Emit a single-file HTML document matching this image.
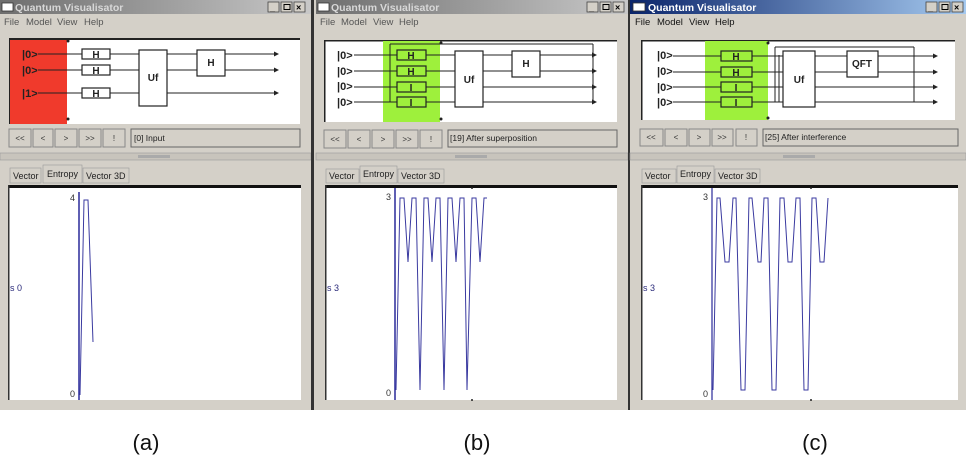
<!DOCTYPE html>
<html><head><meta charset="utf-8"><style>
html,body{margin:0;padding:0;background:#fff;}
svg{display:block;font-family:"Liberation Sans",sans-serif;}
</style></head><body>
<svg width="966" height="466" viewBox="0 0 966 466" xmlns="http://www.w3.org/2000/svg">
<defs>
<linearGradient id="gi" x1="0" x2="1"><stop offset="0" stop-color="#6e6e6e"/><stop offset="1" stop-color="#c8c8c8"/></linearGradient>
<linearGradient id="ga" x1="0" x2="1"><stop offset="0" stop-color="#0a246a"/><stop offset="1" stop-color="#a6caf0"/></linearGradient>
<marker id="ar" markerWidth="5" markerHeight="5" refX="4" refY="2.5" orient="auto"><path d="M0,0 L5,2.5 L0,5z" fill="#222"/></marker>
</defs>
<rect width="966" height="466" fill="#fff"/>

<!-- ===== Window A ===== -->
<g>
<rect x="0" y="0" width="311" height="410" fill="#d4d0c8"/>
<rect x="0" y="0" width="311" height="14" fill="url(#gi)"/>
<rect x="2" y="3" width="11" height="8" fill="#fff" stroke="#333" stroke-width="0.8"/>
<text x="15" y="11" font-size="10.5" font-weight="bold" fill="#d8d8d8">Quantum Visualisator</text>
<g fill="#d4d0c8" stroke="#444" stroke-width="0.8"><rect x="268" y="2" width="11" height="10"/><rect x="281" y="2" width="11" height="10"/><rect x="294" y="2" width="11" height="10"/></g>
<text x="270" y="11" font-size="9" font-weight="bold">_</text><rect x="284" y="4.5" width="6" height="5" fill="none" stroke="#000"/><text x="296" y="10.5" font-size="9" font-weight="bold">×</text>
<g font-size="9.5" fill="#555"><text x="4" y="25">File</text><text x="26" y="25">Model</text><text x="57" y="25">View</text><text x="84" y="25">Help</text></g>
<rect x="9" y="38" width="291" height="86" fill="#fff"/>
<rect x="9" y="38" width="291" height="2" fill="#222"/><rect x="9" y="38" width="1.5" height="86" fill="#222"/>
<rect x="10" y="40" width="57" height="84" fill="#f03a2c"/>
<circle cx="68" cy="41" r="1.5" fill="#222"/><circle cx="68" cy="119" r="1.5" fill="#222"/>
<g font-size="11" font-weight="bold" fill="#222"><text x="22" y="58">|0&gt;</text><text x="22" y="74">|0&gt;</text><text x="22" y="97">|1&gt;</text></g>
<g stroke="#222" stroke-width="1" marker-end="url(#ar)"><line x1="38" y1="54" x2="278" y2="54"/><line x1="38" y1="70" x2="278" y2="70"/><line x1="38" y1="93" x2="278" y2="93"/></g>
<g fill="#fff" stroke="#222" stroke-width="1.2"><rect x="82" y="49" width="28" height="10"/><rect x="82" y="65" width="28" height="10"/><rect x="82" y="88" width="28" height="10"/><rect x="139" y="50" width="28" height="56"/><rect x="197" y="50" width="28" height="26"/></g>
<g font-size="10" font-weight="bold" fill="#222" text-anchor="middle"><text x="96" y="58">H</text><text x="96" y="74">H</text><text x="96" y="97">H</text><text x="153" y="81">Uf</text><text x="211" y="66">H</text></g>
<g fill="#d4d0c8" stroke="#888" stroke-width="1"><rect x="9" y="129" width="22" height="18"/><rect x="33" y="129" width="20" height="18"/><rect x="55" y="129" width="22" height="18"/><rect x="79" y="129" width="22" height="18"/><rect x="103" y="129" width="22" height="18"/></g>
<g font-size="8" fill="#333" text-anchor="middle"><text x="20" y="141">&lt;&lt;</text><text x="43" y="141">&lt;</text><text x="66" y="141">&gt;</text><text x="90" y="141">&gt;&gt;</text><text x="114" y="141">!</text></g>
<rect x="131" y="129" width="169" height="18" fill="#d4d0c8" stroke="#666"/>
<text x="134" y="141" font-size="8.5" fill="#222">[0] Input</text>
<rect x="0" y="153" width="311" height="7" fill="#c8c4bc" stroke="#999" stroke-width="0.6"/><rect x="138" y="155" width="32" height="3" fill="#aaa"/>
<rect x="10" y="168" width="31" height="15" fill="#d4d0c8" stroke="#999" stroke-width="0.6"/>
<rect x="43" y="165" width="39" height="18" fill="#d4d0c8" stroke="#999" stroke-width="0.6"/>
<rect x="83" y="168" width="46" height="15" fill="#d4d0c8" stroke="#999" stroke-width="0.6"/>
<g font-size="9" fill="#222"><text x="13" y="179">Vector</text><text x="47" y="177">Entropy</text><text x="86" y="179">Vector 3D</text></g>
<rect x="8" y="185" width="293" height="215" fill="#fff"/>
<rect x="8" y="185" width="293" height="3" fill="#111"/><rect x="8" y="185" width="1.5" height="215" fill="#333"/>
<line x1="79" y1="192" x2="79" y2="400" stroke="#2a2a9a" stroke-width="1.5"/>
<g font-size="9" fill="#333"><text x="70" y="201">4</text><text x="70" y="397">0</text></g>
<text x="10" y="291" font-size="9" fill="#2a2a7a">s 0</text>
<polyline points="80,395 84,200 88,200 93,342" fill="none" stroke="#3a3aa0" stroke-width="1"/>
<rect x="311" y="0" width="3" height="410" fill="#333"/>
</g>

<!-- ===== Window B ===== -->
<g>
<rect x="314" y="0" width="316" height="410" fill="#d4d0c8"/>
<rect x="316" y="0" width="312" height="14" fill="url(#gi)"/>
<rect x="318" y="3" width="11" height="8" fill="#fff" stroke="#333" stroke-width="0.8"/>
<text x="331" y="11" font-size="10.5" font-weight="bold" fill="#d8d8d8">Quantum Visualisator</text>
<g fill="#d4d0c8" stroke="#444" stroke-width="0.8"><rect x="587" y="2" width="11" height="10"/><rect x="600" y="2" width="11" height="10"/><rect x="613" y="2" width="11" height="10"/></g>
<text x="589" y="11" font-size="9" font-weight="bold">_</text><rect x="603" y="4.5" width="6" height="5" fill="none" stroke="#000"/><text x="615" y="10.5" font-size="9" font-weight="bold">×</text>
<g font-size="9.5" fill="#555"><text x="320" y="25">File</text><text x="341" y="25">Model</text><text x="373" y="25">View</text><text x="399" y="25">Help</text></g>
<rect x="324" y="40" width="293" height="82" fill="#fff"/>
<rect x="324" y="40" width="293" height="1.5" fill="#222"/><rect x="324" y="40" width="1.5" height="82" fill="#222"/>
<rect x="383" y="41" width="57" height="81" fill="#9ef03c"/>
<circle cx="441" cy="43" r="1.5" fill="#222"/><circle cx="441" cy="119" r="1.5" fill="#222"/>
<g font-size="11" font-weight="bold" fill="#222"><text x="337" y="59">|0&gt;</text><text x="337" y="75">|0&gt;</text><text x="337" y="90">|0&gt;</text><text x="337" y="106">|0&gt;</text></g>
<g stroke="#222" stroke-width="1"><line x1="390" y1="44" x2="593" y2="44"/><line x1="593" y1="44" x2="593" y2="102"/><line x1="390" y1="44" x2="390" y2="102"/></g>
<g stroke="#222" stroke-width="1" marker-end="url(#ar)"><line x1="354" y1="55" x2="596" y2="55"/><line x1="354" y1="71" x2="596" y2="71"/><line x1="354" y1="87" x2="596" y2="87"/><line x1="354" y1="102" x2="596" y2="102"/></g>
<g fill="#9ef03c" stroke="#222" stroke-width="1.2"><rect x="397" y="50" width="29" height="10"/><rect x="397" y="66" width="29" height="10"/><rect x="397" y="82" width="29" height="10"/><rect x="397" y="97" width="29" height="10"/></g>
<g fill="#fff" stroke="#222" stroke-width="1.2"><rect x="455" y="51" width="28" height="56"/><rect x="512" y="51" width="28" height="26"/></g>
<g font-size="10" font-weight="bold" fill="#222" text-anchor="middle"><text x="411" y="59">H</text><text x="411" y="75">H</text><text x="411" y="91">I</text><text x="411" y="106">I</text><text x="469" y="83">Uf</text><text x="526" y="67">H</text></g>
<g fill="#d4d0c8" stroke="#888" stroke-width="1"><rect x="324" y="130" width="22" height="18"/><rect x="348" y="130" width="22" height="18"/><rect x="372" y="130" width="22" height="18"/><rect x="396" y="130" width="22" height="18"/><rect x="420" y="130" width="22" height="18"/></g>
<g font-size="8" fill="#333" text-anchor="middle"><text x="335" y="142">&lt;&lt;</text><text x="359" y="142">&lt;</text><text x="383" y="142">&gt;</text><text x="407" y="142">&gt;&gt;</text><text x="431" y="142">!</text></g>
<rect x="448" y="130" width="169" height="17" fill="#d4d0c8" stroke="#666"/>
<text x="450" y="141" font-size="8.5" fill="#222">[19] After superposition</text>
<rect x="316" y="153" width="312" height="7" fill="#c8c4bc" stroke="#999" stroke-width="0.6"/><rect x="455" y="155" width="32" height="3" fill="#aaa"/>
<rect x="326" y="169" width="33" height="14" fill="#d4d0c8" stroke="#999" stroke-width="0.6"/>
<rect x="360" y="166" width="37" height="17" fill="#d4d0c8" stroke="#999" stroke-width="0.6"/>
<rect x="398" y="169" width="46" height="14" fill="#d4d0c8" stroke="#999" stroke-width="0.6"/>
<g font-size="9" fill="#222"><text x="329" y="179">Vector</text><text x="363" y="177">Entropy</text><text x="401" y="179">Vector 3D</text></g>
<rect x="325" y="187" width="292" height="213" fill="#fff"/>
<rect x="325" y="185" width="292" height="3" fill="#111"/><rect x="325" y="185" width="1.5" height="215" fill="#333"/>
<line x1="395" y1="188" x2="395" y2="400" stroke="#2a2a9a" stroke-width="1.5"/>
<g font-size="9" fill="#333"><text x="386" y="200">3</text><text x="386" y="396">0</text></g>
<text x="327" y="291" font-size="9" fill="#2a2a7a">s 3</text>
<polyline points="396,390 400,198 404,198 408,262 412,198 416,198 420,390 424,198 428,198 432,262 436,198 440,198 444,390 448,198 452,198 456,262 460,198 464,198 467,390 472,198 476,198 480,262 484,198 487,198" fill="none" stroke="#3a3aa0" stroke-width="1"/>
<circle cx="472" cy="188" r="1" fill="#222"/><circle cx="472" cy="400" r="1" fill="#222"/>
<rect x="628" y="0" width="2" height="410" fill="#333"/>
</g>

<!-- ===== Window C ===== -->
<g>
<rect x="630" y="0" width="336" height="410" fill="#d4d0c8"/>
<rect x="630" y="0" width="336" height="14" fill="url(#ga)"/>
<rect x="633" y="3" width="12" height="8" fill="#fff" stroke="#333" stroke-width="0.8"/>
<text x="648" y="11" font-size="10.5" font-weight="bold" fill="#fff">Quantum Visualisator</text>
<g fill="#d4d0c8" stroke="#444" stroke-width="0.8"><rect x="926" y="2" width="11" height="10"/><rect x="939" y="2" width="11" height="10"/><rect x="952" y="2" width="11" height="10"/></g>
<text x="928" y="11" font-size="9" font-weight="bold">_</text><rect x="942" y="4.5" width="6" height="5" fill="none" stroke="#000"/><text x="954" y="10.5" font-size="9" font-weight="bold">×</text>
<g font-size="9.5" fill="#111"><text x="635" y="25">File</text><text x="657" y="25">Model</text><text x="689" y="25">View</text><text x="715" y="25">Help</text></g>
<rect x="641" y="40" width="314" height="80" fill="#fff"/>
<rect x="641" y="40" width="314" height="1.5" fill="#222"/><rect x="641" y="40" width="1.5" height="80" fill="#222"/>
<rect x="705" y="41" width="63" height="79" fill="#9ef03c"/>
<circle cx="768" cy="43" r="1.5" fill="#222"/><circle cx="768" cy="118" r="1.5" fill="#222"/>
<g font-size="11" font-weight="bold" fill="#222"><text x="657" y="59">|0&gt;</text><text x="657" y="75">|0&gt;</text><text x="657" y="91">|0&gt;</text><text x="657" y="106">|0&gt;</text></g>
<g stroke="#222" stroke-width="1"><line x1="775" y1="47" x2="914" y2="47"/><line x1="914" y1="47" x2="914" y2="102"/><line x1="775" y1="47" x2="775" y2="102"/><line x1="779" y1="55" x2="779" y2="102"/></g>
<g stroke="#222" stroke-width="1" marker-end="url(#ar)"><line x1="673" y1="56" x2="937" y2="56"/><line x1="673" y1="72" x2="937" y2="72"/><line x1="673" y1="87" x2="937" y2="87"/><line x1="673" y1="102" x2="937" y2="102"/></g>
<g fill="#9ef03c" stroke="#222" stroke-width="1.2"><rect x="721" y="51" width="31" height="10"/><rect x="721" y="67" width="31" height="10"/><rect x="721" y="82" width="31" height="10"/><rect x="721" y="97" width="31" height="10"/></g>
<g fill="#fff" stroke="#222" stroke-width="1.2"><rect x="783" y="51" width="32" height="56"/><rect x="847" y="51" width="31" height="26"/></g>
<g font-size="10" font-weight="bold" fill="#222" text-anchor="middle"><text x="736" y="60">H</text><text x="736" y="76">H</text><text x="736" y="91">I</text><text x="736" y="106">I</text><text x="799" y="83">Uf</text><text x="862" y="67">QFT</text></g>
<g fill="#d4d0c8" stroke="#888" stroke-width="1"><rect x="640" y="129" width="23" height="17"/><rect x="665" y="129" width="22" height="17"/><rect x="689" y="129" width="21" height="17"/><rect x="712" y="129" width="21" height="17"/><rect x="736" y="129" width="21" height="17"/></g>
<g font-size="8" fill="#333" text-anchor="middle"><text x="651" y="140">&lt;&lt;</text><text x="676" y="140">&lt;</text><text x="699" y="140">&gt;</text><text x="722" y="140">&gt;&gt;</text><text x="746" y="140">!</text></g>
<rect x="763" y="129" width="195" height="17" fill="#d4d0c8" stroke="#666"/>
<text x="765" y="140" font-size="8.5" fill="#222">[25] After interference</text>
<rect x="630" y="153" width="336" height="7" fill="#c8c4bc" stroke="#999" stroke-width="0.6"/><rect x="783" y="155" width="32" height="3" fill="#aaa"/>
<rect x="642" y="169" width="34" height="14" fill="#d4d0c8" stroke="#999" stroke-width="0.6"/>
<rect x="677" y="166" width="37" height="17" fill="#d4d0c8" stroke="#999" stroke-width="0.6"/>
<rect x="715" y="169" width="45" height="14" fill="#d4d0c8" stroke="#999" stroke-width="0.6"/>
<g font-size="9" fill="#222"><text x="645" y="179">Vector</text><text x="680" y="177">Entropy</text><text x="718" y="179">Vector 3D</text></g>
<rect x="641" y="187" width="317" height="213" fill="#fff"/>
<rect x="641" y="185" width="317" height="3" fill="#111"/><rect x="641" y="185" width="1.5" height="215" fill="#333"/>
<line x1="712" y1="188" x2="712" y2="400" stroke="#2a2a9a" stroke-width="1.2"/>
<g font-size="9" fill="#333"><text x="703" y="200">3</text><text x="703" y="397">0</text></g>
<text x="643" y="291" font-size="9" fill="#2a2a7a">s 3</text>
<polyline points="713,390 717,198 720,198 725,262 729,262 733,198 736,198 741,390 745,390 749,198 752,198 758,262 761,262 764,198 768,198 772,390 776,390 780,198 784,198 788,262 792,262 796,198 800,198 804,390 808,390 812,198 816,198 820,262 824,262 828,198" fill="none" stroke="#3a3aa0" stroke-width="1"/>
<circle cx="811" cy="188" r="1" fill="#222"/><circle cx="811" cy="400" r="1" fill="#222"/>
</g>

<g font-size="22" fill="#111" text-anchor="middle"><text x="146" y="450">(a)</text><text x="477" y="450">(b)</text><text x="815" y="450">(c)</text></g>
</svg>
</body></html>
